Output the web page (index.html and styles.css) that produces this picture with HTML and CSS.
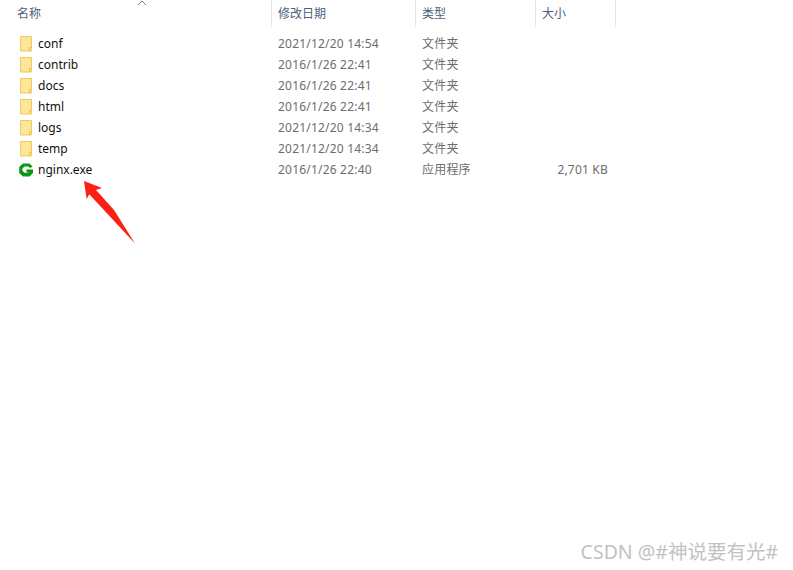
FILE: index.html
```html
<!DOCTYPE html>
<html lang="zh-CN">
<head>
<meta charset="utf-8">
<title>nginx</title>
<link rel="stylesheet" href="styles.css">
</head>
<body>
<main class="explorer">
  <svg class="sort-caret" width="10" height="6" viewBox="0 0 10 6"><path d="M1 5 L5 1 L9 5" fill="none" stroke="#74787c" stroke-width="1"/></svg>
  <div class="row header">
    <div class="cell name-head">名称</div>
    <div class="cell">修改日期</div>
    <div class="cell">类型</div>
    <div class="cell">大小</div>
  </div>
  <div class="files">
    <div class="row file"><div class="cell name"><svg class="icon" viewBox="0 0 14 16"><use href="#folder"/></svg>conf</div><div class="cell meta">2021/12/20 14:54</div><div class="cell meta">文件夹</div><div class="cell meta size"></div></div>
    <div class="row file"><div class="cell name"><svg class="icon" viewBox="0 0 14 16"><use href="#folder"/></svg>contrib</div><div class="cell meta">2016/1/26 22:41</div><div class="cell meta">文件夹</div><div class="cell meta size"></div></div>
    <div class="row file"><div class="cell name"><svg class="icon" viewBox="0 0 14 16"><use href="#folder"/></svg>docs</div><div class="cell meta">2016/1/26 22:41</div><div class="cell meta">文件夹</div><div class="cell meta size"></div></div>
    <div class="row file"><div class="cell name"><svg class="icon" viewBox="0 0 14 16"><use href="#folder"/></svg>html</div><div class="cell meta">2016/1/26 22:41</div><div class="cell meta">文件夹</div><div class="cell meta size"></div></div>
    <div class="row file"><div class="cell name"><svg class="icon" viewBox="0 0 14 16"><use href="#folder"/></svg>logs</div><div class="cell meta">2021/12/20 14:34</div><div class="cell meta">文件夹</div><div class="cell meta size"></div></div>
    <div class="row file"><div class="cell name"><svg class="icon" viewBox="0 0 14 16"><use href="#folder"/></svg>temp</div><div class="cell meta">2021/12/20 14:34</div><div class="cell meta">文件夹</div><div class="cell meta size"></div></div>
    <div class="row file"><div class="cell name"><svg class="icon" viewBox="0 0 14 16"><path d="M4 1.5 H10.4 L13.6 4.4 L11 6 L9.4 4.6 H5.6 L3.4 6.6 V8.8 L5.6 10.8 H9 L9.8 10.2 H7.4 V7.4 H14 V11 L10.6 14.5 H4 L.2 11 V5 Z" fill="#069a16"/></svg>nginx.exe</div><div class="cell meta">2016/1/26 22:40</div><div class="cell meta">应用程序</div><div class="cell meta size">2,701 KB</div></div>
  </div>
  <svg class="arrow" width="60" height="70" viewBox="0 0 60 70"><path d="M0 1 L18 8 L12 10 L30 30 L51 63.5 L5.3 14.3 L2.7 19 Z" fill="#fb1f14"/></svg>
  <div class="watermark">CSDN @#神说要有光#</div>
  <svg width="0" height="0" class="defs"><defs>
    <g id="folder">
      <path d="M1.5 .5 H12.5 V15 H1.5 Z" fill="#fde69a" stroke="#f1ca59"/>
      <path d="M10.5 15 V11.5 H12.5" fill="#fde69a" stroke="#e9bd4b"/>
    </g>
  </defs></svg>
</main>
</body>
</html>
```
FILE: styles.css
```css
html, body {
  margin: 0;
  padding: 0;
  background: #fff;
}
.explorer {
  position: relative;
  width: 793px;
  height: 570px;
  overflow: hidden;
  font-family: "Noto Sans", "Noto Sans CJK SC", sans-serif;
  font-size: 12px;
}
.row {
  display: grid;
  grid-template-columns: 272px 144px 120px 80px;
  width: 616px;
}
.header {
  height: 27px;
  font-family: "Noto Sans CJK SC", sans-serif;
  color: #4c607a;
  line-height: 25px;
}
.header .cell {
  padding-left: 6px;
  border-right: 1px solid #e5e5e5;
  box-sizing: border-box;
  white-space: nowrap;
}
.header .name-head {
  padding-left: 17px;
}
.files {
  padding-top: 6px;
}
.file {
  height: 21px;
  line-height: 21px;
}
.file .cell {
  white-space: nowrap;
}
.name {
  display: flex;
  align-items: center;
  padding-left: 19px;
  color: #111;
}
.icon {
  width: 14px;
  height: 16px;
  margin-right: 5px;
  flex: none;
}
.meta {
  padding-left: 6px;
  color: #6d6d6d;
  letter-spacing: .2px;
}
.size {
  padding-left: 0;
  padding-right: 8px;
  text-align: right;
}
.sort-caret {
  position: absolute;
  left: 137px;
  top: 0;
}
.arrow {
  position: absolute;
  left: 84px;
  top: 180px;
}
.watermark {
  position: absolute;
  right: 15px;
  bottom: 6px;
  font-family: "Noto Sans", "Noto Sans CJK SC", sans-serif;
  font-size: 19.5px;
  line-height: 24px;
  color: #c2c2c2;
  white-space: nowrap;
}
.defs {
  position: absolute;
}
```
